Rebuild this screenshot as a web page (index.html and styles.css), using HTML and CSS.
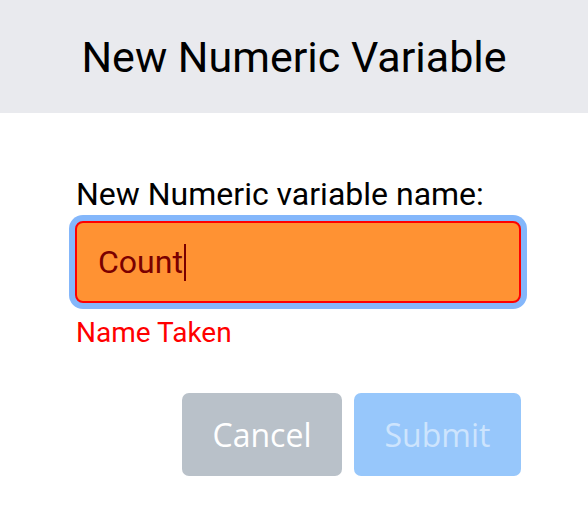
FILE: index.html
```html
<!DOCTYPE html>
<html>
<head>
<meta charset="utf-8">
<link rel="stylesheet" href="styles.css">
</head>
<body>
<div class="dialog">
  <div class="header">New Numeric Variable</div>
  <div class="body">
    <label class="label" for="name">New Numeric variable name:</label>
    <div class="input"><span class="value">Count</span><span class="caret"></span></div>
    <div class="error">Name Taken</div>
    <div class="actions">
      <button class="btn cancel">Cancel</button>
      <button class="btn submit">Submit</button>
    </div>
  </div>
</div>
</body>
</html>
```
FILE: styles.css
```css
html, body {
  margin: 0;
  padding: 0;
  background: #ffffff;
}
.dialog {
  width: 588px;
  height: 530px;
  font-family: Roboto, "Liberation Sans", sans-serif;
}
.header {
  height: 113px;
  background: #e9eaee;
  display: flex;
  align-items: center;
  justify-content: center;
  font-size: 43px;
  color: #000;
}
.body {
  padding: 63px 67px 0 75px;
  display: flex;
  flex-direction: column;
}
.label {
  font-size: 32px;
  color: #000;
  line-height: 36px;
  padding-left: 1px;
}
.input {
  margin-top: 9px;
  height: 78px;
  border: 2px solid #ff0000;
  border-radius: 8px;
  background: #ff9233;
  box-shadow: 0 0 0 6px #84b7fb;
  display: flex;
  align-items: center;
  padding-left: 21px;
  font-size: 32px;
  color: #7a0000;
}
.caret {
  width: 2px;
  height: 37px;
  background: #7a0000;
  margin-left: 1px;
}
.error {
  margin-top: 14px;
  font-size: 28px;
  line-height: 32px;
  color: #ff0000;
  padding-left: 1px;
}
.actions {
  margin-top: 44px;
  display: flex;
  justify-content: flex-end;
  gap: 12px;
}
.btn {
  height: 83px;
  border: none;
  border-radius: 7px;
  font-family: "Open Sans", sans-serif;
  font-size: 32px;
  padding: 0;
}
.cancel {
  width: 160px;
  background: #b9c1c9;
  color: #ffffff;
}
.submit {
  width: 167px;
  background: #97c7fb;
  color: #cde4fd;
}
```
